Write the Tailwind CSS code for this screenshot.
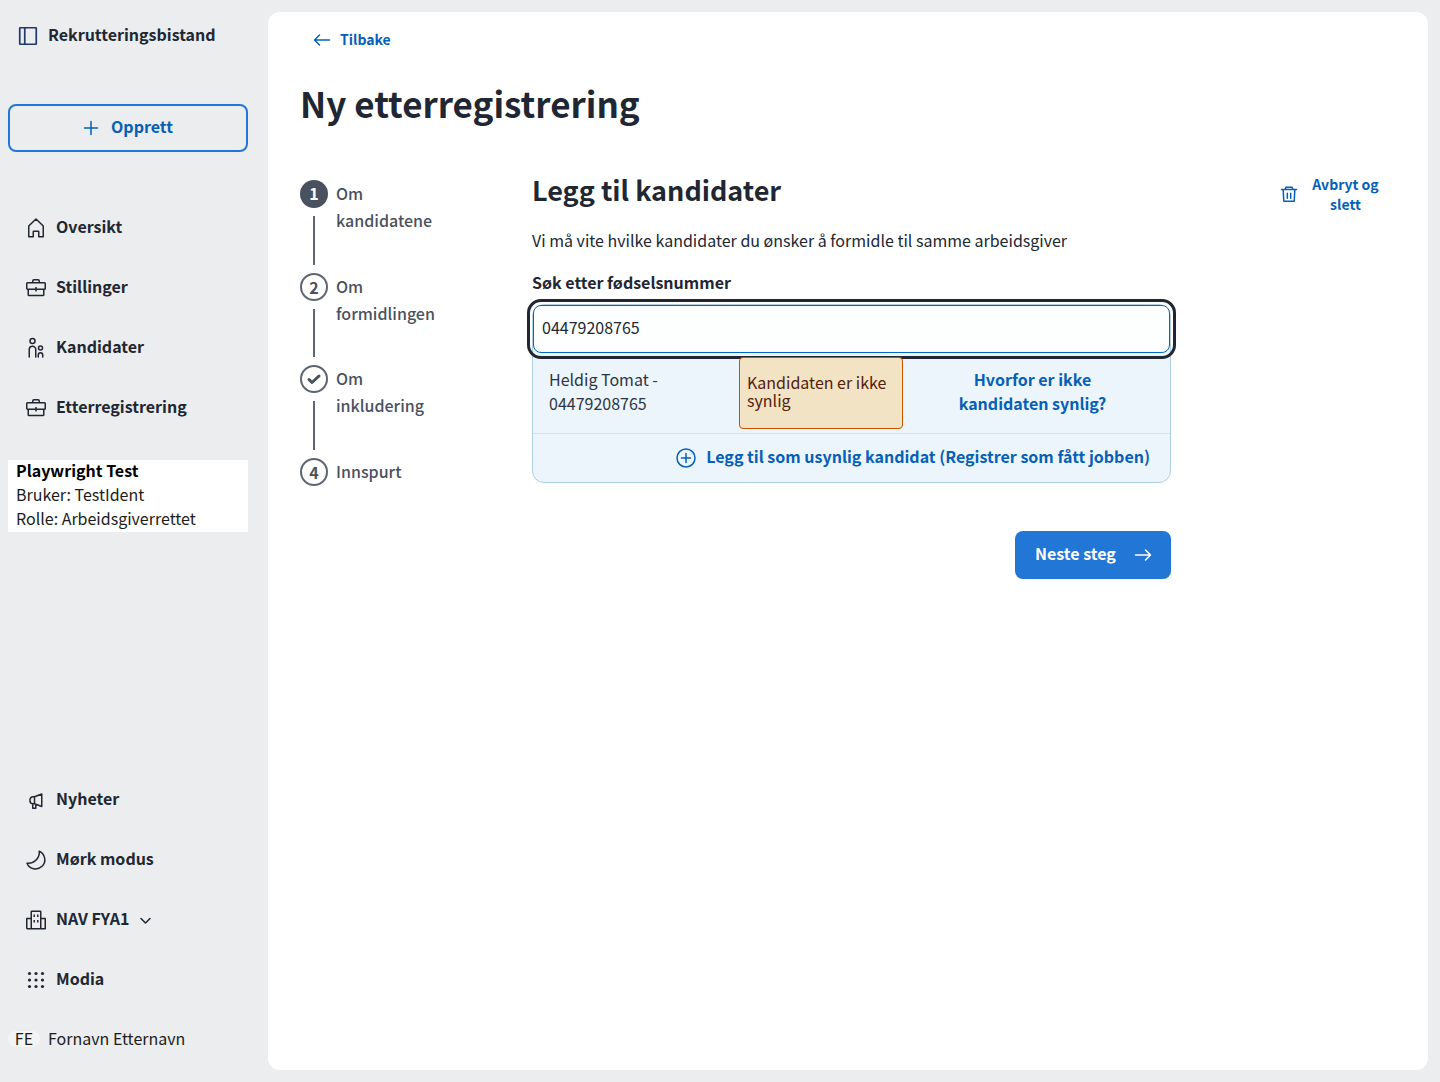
<!DOCTYPE html>
<html lang="no">
<head>
<meta charset="utf-8">
<meta name="viewport" content="width=device-width, initial-scale=1">
<title>Ny etterregistrering</title>
<script src="https://cdn.jsdelivr.net/npm/@tailwindcss/browser@4"></script>
</head>
<body class="flex min-h-screen bg-[#ebedee] font-['Noto_Sans_CJK_SC','Open_Sans',sans-serif] text-base leading-6 text-[#202733]">

<svg class="hidden" aria-hidden="true">
  <symbol id="briefcase" viewBox="0 0 24 24"><path d="M8.75 6.5V5c0-.7.55-1.25 1.25-1.25h4c.7 0 1.25.55 1.25 1.25v1.5M3.5 6.75h17c.4 0 .75.35.75.75v5c0 .4-.35.75-.75.75h-17a.75.75 0 0 1-.75-.75v-5c0-.4.35-.75.75-.75ZM4.250 13.250v5.500c0 .4.35.75.75.75h14c.4 0 .75-.35.75-.75v-5.500M12 11v4.500"/></symbol>
</svg>

<aside class="flex w-64 shrink-0 flex-col px-2 pt-3 pb-[31px]">
  <div class="flex h-12 items-center gap-2 pl-2">
    <button type="button" aria-label="Skjul meny" class="text-[#1d3a6b]"><svg class="size-6" viewBox="0 0 24 24" fill="none" stroke="currentColor" stroke-width="1.700"><rect x="3.750" y="3.750" width="16.500" height="16.500" rx=".5"/><path d="M8.750 4v16"/></svg></button>
    <span class="pb-1 font-bold">Rekrutteringsbistand</span>
  </div>
  <button type="button" class="mt-11 flex h-12 items-center justify-center gap-2 rounded-lg border-2 border-[#2277d6] pr-1 font-bold text-[#0560b8]">
    <svg class="size-6" viewBox="0 0 24 24" fill="none" stroke="currentColor" stroke-width="1.5" stroke-linecap="round"><path d="M12 5.500v13M5.500 12h13"/></svg><span class="pb-1">Opprett</span>
  </button>
  <nav class="mt-[52px] flex flex-col gap-3 font-bold">
    <a href="#" class="flex h-12 items-center gap-2 pl-4"><svg class="size-6" viewBox="0 0 24 24" fill="none" stroke="currentColor" stroke-width="1.5" stroke-linejoin="round"><path d="m12 3 7.250 7v10.750h-4.500v-5a.5.5 0 0 0-.5-.5h-4.500a.5.5 0 0 0-.5.5v5h-4.500V10Z"/></svg><span class="pb-1">Oversikt</span></a>
    <a href="#" class="flex h-12 items-center gap-2 pl-4"><svg class="size-6" fill="none" stroke="currentColor" stroke-width="1.5"><use href="#briefcase"/></svg><span class="pb-1">Stillinger</span></a>
    <a href="#" class="flex h-12 items-center gap-2 pl-4"><svg class="size-6" viewBox="0 0 24 24" fill="none" stroke="currentColor" stroke-width="1.5" stroke-linecap="round"><circle cx="8.500" cy="5" r="2.500"/><path d="M5.250 21v-7.500a3.250 3.250 0 0 1 6.500 0V21"/><circle cx="16.500" cy="12" r="2"/><path d="M14.250 21v-2a2.250 2.250 0 0 1 4.500 0v2"/></svg><span class="pb-1">Kandidater</span></a>
    <a href="#" class="flex h-12 items-center gap-2 pl-4"><svg class="size-6" fill="none" stroke="currentColor" stroke-width="1.5"><use href="#briefcase"/></svg><span class="pb-1">Etterregistrering</span></a>
  </nav>
  <div class="mt-7 bg-white px-2 pb-0.5 text-[#1c1c1c]">
    <p class="pb-0.5 leading-5 font-bold text-black">Playwright Test</p>
    <p>Bruker: TestIdent</p>
    <p>Rolle: Arbeidsgiverrettet</p>
  </div>
  <div class="mt-auto flex flex-col gap-3 font-bold">
    <button type="button" class="flex h-12 items-center gap-2 pl-4"><svg class="size-6" viewBox="0 0 24 24" fill="none" stroke="currentColor" stroke-width="1.500" stroke-linejoin="round"><path d="M10.500 8.750 17.750 6v12.500l-7.250-2.750H9a3 3 0 0 1-3-3v-1a3 3 0 0 1 3-3ZM10.500 8.750v7M8.750 15.750v4.500h3v-4"/></svg><span class="pb-1">Nyheter</span></button>
    <button type="button" class="flex h-12 items-center gap-2 pl-4"><svg class="size-6" viewBox="0 0 24 24" fill="none" stroke="currentColor" stroke-width="1.500" stroke-linejoin="round"><path d="M15.250 3.250A9.250 9.250 0 1 1 3 15.250C9.500 16 16 10.500 15.250 3.250Z"/></svg><span class="pb-1">Mørk modus</span></button>
    <button type="button" class="flex h-12 items-center gap-2 pl-4"><svg class="size-6" viewBox="0 0 24 24" fill="none" stroke="currentColor" stroke-width="1.500" stroke-linejoin="round"><path d="M7.250 20.750v-17a.5.5 0 0 1 .5-.5h8.500a.5.5 0 0 1 .5.5v17M2.750 20.750h18.500V10.500h-4.500M7.250 10.500h-4.500v10.250"/><path d="M10.250 6.500v2.500M13.750 6.500v2.500M10.250 12v2.500M13.750 12v2.500"/></svg><span class="pb-1">NAV FYA1</span><svg class="-ml-1 size-6" viewBox="0 0 24 24" fill="none" stroke="currentColor" stroke-width="1.500" stroke-linecap="round" stroke-linejoin="round"><path d="m8 10.500 4.500 4.500 4.500-4.500"/></svg></button>
    <button type="button" class="flex h-12 items-center gap-2 pl-4"><svg class="size-6" viewBox="0 0 24 24" fill="currentColor"><circle cx="5.500" cy="5.500" r="1.600"/><circle cx="12" cy="5.500" r="1.600"/><circle cx="18.500" cy="5.500" r="1.600"/><circle cx="5.500" cy="12" r="1.600"/><circle cx="12" cy="12" r="1.600"/><circle cx="18.500" cy="12" r="1.600"/><circle cx="5.500" cy="18.500" r="1.600"/><circle cx="12" cy="18.500" r="1.600"/><circle cx="18.500" cy="18.500" r="1.600"/></svg><span class="pb-1">Modia</span></button>
  </div>
  <div class="mt-[23px] flex h-6 items-center gap-2 text-[#1c1c1c]">
    <span class="flex h-4 w-8 items-center justify-center rounded-full bg-[#f4f4f3] pb-0.5">FE</span>
    <span class="pb-0.5">Fornavn Etternavn</span>
  </div>
</aside>

<main class="m-3 flex-1 rounded-xl bg-white px-8 pt-3 pb-8">
  <a href="#" class="flex h-8 w-fit items-center gap-2 px-3 text-sm font-bold text-[#0560b8]">
    <svg class="size-5" viewBox="0 0 24 24" fill="none" stroke="currentColor" stroke-width="1.800" stroke-linecap="round" stroke-linejoin="round"><path d="M21 12H3.500M9 6l-6 6 6 6"/></svg><span class="pb-0.5">Tilbake</span>
  </a>
  <h1 class="mt-5 text-[35px] leading-[54px] font-bold">Ny etterregistrering</h1>

  <div class="mt-[42px] flex items-start">
    <ol class="mt-2 mr-16 flex w-42 flex-col gap-2 font-medium text-[#49515e]">
      <li class="flex gap-2">
        <div class="flex flex-col items-center gap-2"><span class="grid size-7 place-items-center rounded-full bg-[#49515e] pb-0.5 font-bold text-white">1</span><span class="h-[49px] w-0.5 bg-[#5d6573]"></span></div>
        <a href="#" class="w-28 leading-[27px]">Om kandidatene</a>
      </li>
      <li class="flex gap-2">
        <div class="flex flex-col items-center gap-2"><span class="grid size-7 place-items-center rounded-full border-2 border-[#5d6573] pb-1 font-bold">2</span><span class="h-12 w-0.5 bg-[#5d6573]"></span></div>
        <a href="#" class="w-28 leading-[27px]">Om formidlingen</a>
      </li>
      <li class="flex gap-2">
        <div class="flex flex-col items-center gap-2"><span class="grid size-7 place-items-center rounded-full border-2 border-[#5d6573]"><svg class="size-4" viewBox="0 0 16 16" fill="none" stroke="currentColor" stroke-width="3" stroke-linecap="round" stroke-linejoin="round"><path d="m3 8.500 3 3 7-6.500"/></svg></span><span class="h-[49px] w-0.5 bg-[#5d6573]"></span></div>
        <a href="#" class="w-28 leading-[27px]">Om inkludering</a>
      </li>
      <li class="flex gap-2">
        <span class="grid size-7 place-items-center rounded-full border-2 border-[#5d6573] pb-1 font-bold">4</span>
        <a href="#" class="leading-[27px]">Innspurt</a>
      </li>
    </ol>

    <section class="flex flex-1 flex-col">
      <h2 class="text-[27px] leading-9 font-bold">Legg til kandidater</h2>
      <p class="mt-[18px] leading-7">Vi må vite hvilke kandidater du ønsker å formidle til samme arbeidsgiver</p>
      <label for="fnr" class="mt-4 font-bold">Søk etter fødselsnummer</label>
      <div class="mt-2.5 rounded-xl border border-[#afd0e3] bg-[#edf5fc]">
        <input id="fnr" type="text" value="04479208765" class="block h-12 w-full rounded-lg border border-[#0067c5] bg-[#fcfffe] px-2 pb-1 outline-3 outline-offset-3 outline-[#202733]">
        <div class="relative grid grid-cols-[182fr_164fr_243fr] gap-2 px-4 py-1">
          <p class="pt-2.5 pr-10 text-[#2c3440]">Heldig Tomat - 04479208765</p>
          <p class="flex h-18 items-center rounded-sm border border-[#c95100] bg-[#f1e3c4] px-[7px] pb-1 leading-[18px] text-[#54200d]">Kandidaten er ikke synlig</p>
          <button type="button" class="px-10 pb-1 font-bold text-[#0560b8]">Hvorfor er ikke kandidaten synlig?</button>
        </div>
        <div class="flex justify-end border-t border-[#dcdfe3]">
          <button type="button" class="flex h-12 items-center gap-2 px-5 font-bold text-[#0560b8]"><svg class="size-6" viewBox="0 0 24 24" fill="none" stroke="currentColor" stroke-width="1.500" stroke-linecap="round"><circle cx="12" cy="12" r="9"/><path d="M12 7.500v9M7.500 12h9"/></svg><span class="pb-1">Legg til som usynlig kandidat (Registrer som fått jobben)</span></button>
        </div>
      </div>
      <button type="button" class="mt-12 flex h-12 w-39 items-center justify-between self-end rounded-lg bg-[#2277d6] pr-4 pl-5 font-bold text-white"><span class="pb-1">Neste steg</span><svg class="size-6" viewBox="0 0 24 24" fill="none" stroke="currentColor" stroke-width="1.500" stroke-linecap="round" stroke-linejoin="round"><path d="M4.500 12h15M14.500 7l5 5-5 5"/></svg></button>
    </section>

    <button type="button" class="ml-24 flex w-[129px] items-center gap-2 px-3 pt-0.5 text-sm leading-5 font-bold text-[#0560b8]">
      <svg class="size-5 shrink-0" viewBox="0 0 24 24" fill="none" stroke="currentColor" stroke-width="1.800" stroke-linecap="round" stroke-linejoin="round"><path d="M3 6.500h18M7.500 6.250l.75-2.500h7.500l.75 2.500M5 6.750l.75 14h12.500l.75-14M10 11v6M14 11v6"/></svg><span>Avbryt og slett</span>
    </button>
  </div>
</main>
</body>
</html>
